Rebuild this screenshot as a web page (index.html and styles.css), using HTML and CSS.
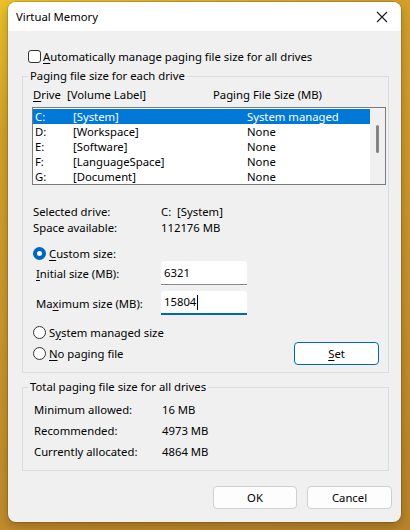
FILE: index.html
```html
<!DOCTYPE html>
<html>
<head>
<meta charset="utf-8">
<link rel="stylesheet" href="styles.css">
</head>
<body>
<div class="window">
  <div class="titlebar">
    <span class="title">Virtual Memory</span>
    <svg class="close" width="12" height="12" viewBox="0 0 12 12"><path d="M1 1 L11 11 M11 1 L1 11" stroke="#1a1a1a" stroke-width="1.1" fill="none"/></svg>
  </div>
  <div class="content">
    <div class="checkrow"><span class="checkbox"></span><span><u>A</u>utomatically manage paging file size for all drives</span></div>

    <fieldset class="group g1">
      <legend>Paging file size for each drive</legend>
      <div class="header"><span class="h-drive"><u>D</u>rive</span><span class="h-label">[Volume Label]</span><span class="h-size">Paging File Size (MB)</span></div>
      <div class="listbox">
        <div class="rows">
          <div class="row sel"><span class="c-drive">C:</span><span class="c-label">[System]</span><span>System managed</span></div>
          <div class="row"><span class="c-drive">D:</span><span class="c-label">[Workspace]</span><span>None</span></div>
          <div class="row"><span class="c-drive">E:</span><span class="c-label">[Software]</span><span>None</span></div>
          <div class="row"><span class="c-drive">F:</span><span class="c-label">[LanguageSpace]</span><span>None</span></div>
          <div class="row"><span class="c-drive">G:</span><span class="c-label">[Document]</span><span>None</span></div>
        </div>
        <div class="scrollbar"><div class="thumb"></div></div>
      </div>
      <div class="info">
        <span>Selected drive:</span><span>C:&nbsp; [System]</span>
        <span>Space available:</span><span>112176 MB</span>
      </div>
      <div class="radiorow r-custom"><span class="radio on"></span><span><u>C</u>ustom size:</span></div>
      <div class="field f-initial"><span class="flabel"><u>I</u>nitial size (MB):</span><span class="input">6321</span></div>
      <div class="field f-max"><span class="flabel">Ma<u>x</u>imum size (MB):</span><span class="input focus">15804<span class="caret"></span></span></div>
      <div class="radiorow r-system"><span class="radio"></span><span>S<u>y</u>stem managed size</span></div>
      <div class="radiorow r-none"><span class="radio"></span><span><u>N</u>o paging file</span><span class="btn set"><u>S</u>et</span></div>
    </fieldset>

    <fieldset class="group g2">
      <legend>Total paging file size for all drives</legend>
      <div class="totals">
        <span>Minimum allowed:</span><span>16 MB</span>
        <span>Recommended:</span><span>4973 MB</span>
        <span>Currently allocated:</span><span>4864 MB</span>
      </div>
    </fieldset>

    <div class="buttons"><span class="btn ok">OK</span><span class="btn cancel">Cancel</span></div>
  </div>
</div>
</body>
</html>
```
FILE: styles.css
```css
* { box-sizing: border-box; }
html, body { margin: 0; padding: 0; }
body {
  width: 410px;
  height: 530px;
  overflow: hidden;
  background: linear-gradient(160deg, #ecc22a 0%, #d5a22c 20%, #c8922c 60%, #b9842a 100%);
  padding: 2px 9px 0 8px;
  font-family: "Noto Sans", "Open Sans", sans-serif;
  font-size: 11.3px;
  color: #000;
}
u { text-decoration: underline; text-underline-offset: 2px; }
.window {
  width: 393px;
  height: 520px;
  border-radius: 8px;
  overflow: hidden;
  background: #f0f0f0;
  box-shadow: 0 0 0 1px rgba(0,0,0,0.12), 0 4px 12px rgba(0,0,0,0.25);
}
.titlebar {
  height: 29px;
  background: #fff;
  display: flex;
  align-items: center;
  justify-content: space-between;
  padding: 0 13px 0 8px;
}
.title { line-height: 16px; }
.close { display: block; }
.content { padding-top: 16px; }
.checkrow {
  height: 18px;
  display: flex;
  align-items: center;
  padding-left: 20px;
  gap: 2px;
}
.checkbox {
  width: 13px;
  height: 13px;
  border: 1px solid #333;
  border-radius: 3px;
  background: #fff;
  flex: none;
}
.group {
  margin: 0 12px 0 14px;
  padding: 0;
  border: 1px solid #dcdcdc;
  min-width: 0;
}
.group legend {
  margin-left: 5px;
  padding: 0 2px;
  line-height: 16px;
}
.g1 { margin-top: 3px; padding: 0 2px 8px 0; }
.header {
  margin-top: 3px;
  height: 16px;
  line-height: 16px;
  display: flex;
  padding-left: 10px;
}
.h-drive { width: 34px; }
.h-label { width: 146px; }
.listbox {
  margin: 4px 0 0 9px;
  height: 78px;
  border: 1px solid #7a7a7a;
  background: #fff;
  display: flex;
  padding: 1px 0;
}
.rows { flex: 1; }
.row {
  height: 15px;
  line-height: 15px;
  display: flex;
  padding-left: 2px;
}
.row.sel { background: #0078d7; color: #fff; }
.c-drive { width: 38px; }
.c-label { width: 174px; }
.scrollbar {
  width: 15px;
  background: #f0f0f0;
  display: flex;
  justify-content: center;
  margin: -1px 0;
}
.thumb {
  width: 3px;
  height: 28px;
  margin-top: 17px;
  background: #858585;
  border-radius: 2px;
}
.info, .totals {
  display: grid;
  grid-template-columns: 128px auto;
  line-height: 16px;
}
.info { margin-top: 19px; padding-left: 10px; }
.radiorow {
  display: flex;
  align-items: center;
  padding-left: 10px;
  gap: 3px;
}
.radio {
  width: 13px;
  height: 13px;
  border-radius: 50%;
  border: 1px solid #333;
  background: #fff;
  flex: none;
}
.radio.on {
  border: 4px solid #0067c0;
  background: #fff;
}
.r-custom { margin-top: 9px; height: 16px; }
.r-system { margin-top: 9px; height: 16px; }
.r-none { margin-top: 2px; height: 22px; }
.field {
  display: flex;
  align-items: center;
  height: 24px;
  padding-left: 13px;
}
.f-max { margin-top: 6px; }
.flabel { width: 125px; }
.input {
  width: 86px;
  height: 24px;
  background: #fff;
  border-bottom: 1px solid #8a8a8a;
  border-radius: 3px 3px 0 0;
  padding: 0 3px;
  line-height: 22px;
  display: flex;
  align-items: center;
}
.input.focus { border-bottom: 2px solid #0067c0; }
.caret { width: 1px; height: 15px; background: #000; margin-left: 1px; }
.btn {
  display: flex;
  align-items: center;
  justify-content: center;
  height: 23px;
  background: #fdfdfd;
  border: 1px solid #d0d0d0;
  border-radius: 4px;
}
.set {
  margin-left: auto;
  margin-right: 7px;
  width: 85px;
  border-color: #0067c0;
  background: #fff;
}
.g2 { margin-top: 6px; padding: 0 0 8px 0; }
.totals {
  grid-auto-rows: 21px;
  align-items: center;
  padding-left: 11px;
  margin-top: 4px;
}
.buttons {
  display: flex;
  justify-content: flex-end;
  gap: 10px;
  padding-right: 9px;
  margin-top: 15px;
}
.ok { width: 84px; }
.cancel { width: 85px; }
```
